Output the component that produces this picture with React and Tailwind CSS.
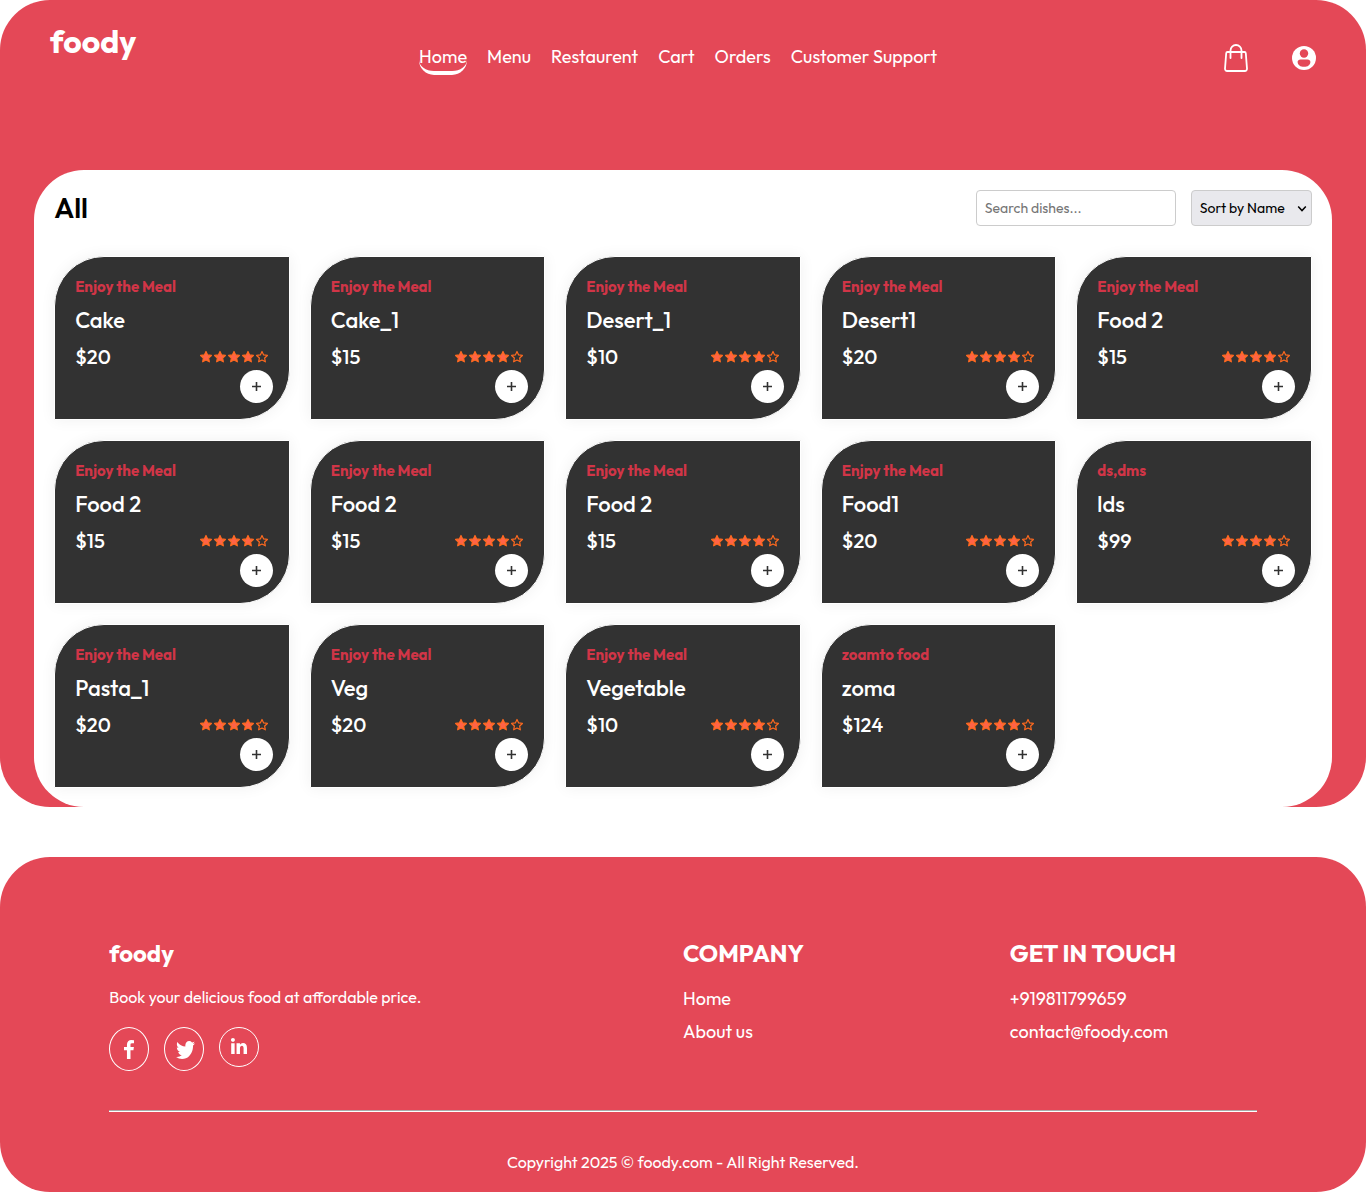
import React from "react";

const navItems = ["Home", "Menu", "Restaurent", "Cart", "Orders", "Customer Support"];

const dishes = [
  { name: "Cake", note: "Enjoy the Meal", price: 20 },
  { name: "Cake_1", note: "Enjoy the Meal", price: 15 },
  { name: "Desert_1", note: "Enjoy the Meal", price: 10 },
  { name: "Desert1", note: "Enjoy the Meal", price: 20 },
  { name: "Food 2", note: "Enjoy the Meal", price: 15 },
  { name: "Food 2", note: "Enjoy the Meal", price: 15 },
  { name: "Food 2", note: "Enjoy the Meal", price: 15 },
  { name: "Food 2", note: "Enjoy the Meal", price: 15 },
  { name: "Food1", note: "Enjpy the Meal", price: 20 },
  { name: "lds", note: "ds,dms", price: 99 },
  { name: "Pasta_1", note: "Enjoy the Meal", price: 20 },
  { name: "Veg", note: "Enjoy the Meal", price: 20 },
  { name: "Vegetable", note: "Enjoy the Meal", price: 10 },
  { name: "zoma", note: "zoamto food", price: 124 },
];

function BagIcon() {
  return (
    <svg width="24" height="28" viewBox="0 0 24 28" fill="none" stroke="white" strokeWidth="1.8" strokeLinecap="round" strokeLinejoin="round" aria-hidden="true">
      <path d="M3.5 8h17a1.3 1.3 0 0 1 1.300 1.200L23 24.600a2.200 2.200 0 0 1-2.200 2.400H3.200A2.200 2.200 0 0 1 1 24.600L2.200 9.200A1.300 1.300 0 0 1 3.500 8Z" />
      <path d="M6.500 14V6.500a5.500 5.500 0 0 1 11 0V14" />
    </svg>
  );
}

function UserIcon() {
  return (
    <svg width="24" height="24" viewBox="0 0 24 24" aria-hidden="true">
      <circle cx="12" cy="12" r="12" fill="white" />
      <circle cx="12" cy="7.500" r="4.200" fill="#e44857" />
      <path d="M8.500 13.400h7c1.700 0 2.900 1 2.900 2.500 0 3-2.800 4.900-6.400 4.900s-6.400-1.900-6.400-4.900c0-1.500 1.200-2.500 2.900-2.500Z" fill="#e44857" />
    </svg>
  );
}

function Star({ filled }) {
  return (
    <svg width="14" height="14" viewBox="0 0 14 14" fill={filled ? "#ff6347" : "none"} stroke="#ff6a1f" strokeWidth="1.2" strokeLinejoin="round" aria-hidden="true">
      <path d="M7 1.500l1.650 3.450 3.750.5-2.750 2.600.7 3.750L7 10l-3.350 1.800.7-3.750L1.600 5.450l3.750-.5Z" />
    </svg>
  );
}

function FacebookIcon() {
  return (
    <svg width="10" height="19" viewBox="95 0 864 1664" preserveAspectRatio="none" fill="white" aria-hidden="true">
      <path d="M959 12v264H802q-86 0-116 36t-30 108v189h293l-39 296H656v759H350V905H95V609h255V391q0-186 104-288.500T731 0q147 0 228 12z" />
    </svg>
  );
}

function TwitterIcon() {
  return (
    <svg width="21" height="20" viewBox="-130 110 1750 1426" preserveAspectRatio="none" fill="white" aria-hidden="true">
      <path d="M1620 408q-67 98-162 167 1 14 1 42 0 130-38 259.500T1305.500 1125 1121 1335.500t-258 146-323 54.500q-271 0-496-145 35 4 78 4 225 0 401-138-105-2-188-64.500T221 1033q33 5 61 5 43 0 85-11-112-23-185.500-111.500T108 710v-4q68 38 146 41-66-44-105-115t-39-154q0-88 44-163 121 149 294.500 238.500T820 653q-8-38-8-74 0-134 94.500-228.500T1135 256q140 0 236 102 109-21 205-78-37 115-142 178 93-10 186-50z" />
    </svg>
  );
}

function LinkedinIcon() {
  return (
    <svg width="16" height="18" viewBox="0 148 1536 1640" preserveAspectRatio="none" fill="white" aria-hidden="true">
      <path d="M349 625v991H19V625h330zm21-306q1 73-50.500 122T184 490h-2q-82 0-132-49T0 319q0-74 51.500-122.500T186 148t133 48.500T370 319zm1166 729v568h-329v-530q0-105-40.500-164.500T1040 862q-63 0-105.500 34.500T871 982q-11 30-11 81v553H531q2-399 2-647t-1-296l-1-48h329v144h-2q20-32 41-56t56.500-52 87-43.500T1157 602q171 0 275 113.500t104 332.500z" />
    </svg>
  );
}

function DishCard({ dish }) {
  return (
    <article className="relative flex h-[164px] flex-col rounded-tl-[50px] rounded-br-[50px] border border-white bg-[#323232] px-5 pt-5 text-white shadow-[0_0_15px_rgba(0,0,0,0.06)]">
      <p className="text-[15px] leading-5 font-bold text-[#d13547]">{dish.note}</p>
      <h2 className="mt-2 text-[22px] leading-[30px] font-medium">{dish.name}</h2>
      <div className="mt-1.5 flex items-center justify-between">
        <p className="text-[20px] leading-8 font-medium">${dish.price}</p>
        <div className="flex" role="img" aria-label="4 of 5 stars">
          {[1, 2, 3, 4, 5].map((n) => <Star key={n} filled={n <= 4} />)}
        </div>
      </div>
      <button aria-label={"Add " + dish.name} className="absolute right-4 bottom-4 flex size-[33px] items-center justify-center rounded-full bg-white">
        <svg width="9" height="9" viewBox="0 0 9 9" stroke="#323232" strokeWidth="1.600" aria-hidden="true">
          <path d="M4.500 0v9M0 4.500h9" />
        </svg>
      </button>
    </article>
  );
}

const social = "flex w-10 items-center justify-center rounded-[50%] border border-white";

export default function App() {
  return (
    <div className="bg-white pb-0.5 font-['Outfit','Lato',sans-serif]">
      <div className="rounded-[50px] bg-[#e44857]">
        <header className="flex h-[170px] items-start justify-between px-[50px] text-white">
          <a href="#" className="mt-5 text-[32px] leading-[42px] font-bold">foody</a>
          <nav className="mt-[42px] flex gap-5 text-lg leading-[29px]">
            {navItems.map((item, i) => (
              <a key={item} href="#" className={i === 0 ? "rounded-[15px] border-b-4 border-white" : ""}>{item}</a>
            ))}
          </nav>
          <div className="mt-11 flex items-center gap-11">
            <button aria-label="Cart" className="pl-1"><BagIcon /></button>
            <button aria-label="Account"><UserIcon /></button>
          </div>
        </header>

        <main className="mx-[2.5%] rounded-[50px] bg-white px-5 pt-5 pb-[19px]">
          <div className="mb-[30px] flex h-9 items-center justify-between">
            <h1 className="text-[28px] leading-9 font-semibold text-black">All</h1>
            <div className="flex h-9 gap-[15px] text-sm">
              <input aria-label="Search dishes" placeholder="Search dishes..." className="w-[200px] rounded border border-[#ccc] px-2 text-black placeholder:text-[#757575]" />
              <div className="relative">
                <select aria-label="Sort dishes" className="h-full w-[121px] appearance-none rounded border border-[#ccc] bg-[#e9e9ed] pr-6 pl-2 text-black">
                  <option>Sort by Name</option>
                  <option>Sort by Price</option>
                </select>
                <svg className="pointer-events-none absolute top-4 right-[5px]" width="10" height="6" viewBox="0 0 10 6" fill="none" stroke="black" strokeWidth="1.500" aria-hidden="true">
                  <path d="M1.200 .6l3.800 4 3.800-4" />
                </svg>
              </div>
            </div>
          </div>
          <div className="grid grid-cols-5 gap-5">
            {dishes.map((dish, i) => <DishCard key={i} dish={dish} />)}
          </div>
        </main>
      </div>

      <footer className="mt-[50px] rounded-[50px] bg-[#e44857] px-[8%] pt-20 pb-[18px] text-white">
        <div className="grid grid-cols-[2fr_1fr_1fr] gap-20">
          <section>
            <h2 className="text-2xl leading-8 font-bold">foody</h2>
            <p className="mt-4 text-base leading-6">Book your delicious food at affordable price.</p>
            <div className="mt-[18px] flex items-start gap-[15px]">
              <a href="#" aria-label="Facebook" className={social + " h-11"}><FacebookIcon /></a>
              <a href="#" aria-label="Twitter" className={social + " h-11"}><TwitterIcon /></a>
              <a href="#" aria-label="LinkedIn" className={social + " h-10"}><LinkedinIcon /></a>
            </div>
          </section>
          <section>
            <h2 className="text-2xl leading-8 font-bold">COMPANY</h2>
            <ul className="mt-[18px] flex flex-col gap-2.5 text-lg leading-[23px]">
              <li><a href="#">Home</a></li>
              <li><a href="#">About us</a></li>
            </ul>
          </section>
          <section>
            <h2 className="text-2xl leading-8 font-bold whitespace-nowrap">GET IN TOUCH</h2>
            <ul className="mt-[18px] flex flex-col gap-2.5 text-lg leading-[23px]">
              <li>+919811799659</li>
              <li>contact@foody.com</li>
            </ul>
          </section>
        </div>
        <hr className="mt-[39px] h-0.5 border-t border-[#a9a9a9] bg-white" />
        <p className="mt-[38px] text-center text-base leading-6">Copyright 2025 © foody.com - All Right Reserved.</p>
      </footer>
    </div>
  );
}
